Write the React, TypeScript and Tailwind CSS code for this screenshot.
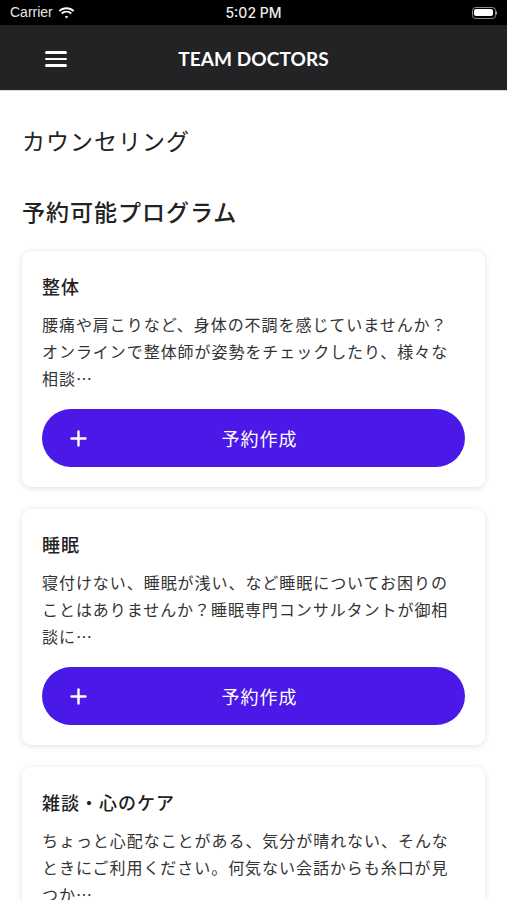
import React from "react";

const programs = [
  {
    title: "整体",
    lines: [
      "腰痛や肩こりなど、身体の不調を感じていませんか？",
      "オンラインで整体師が姿勢をチェックしたり、様々な",
      "相談…",
    ],
  },
  {
    title: "睡眠",
    lines: [
      "寝付けない、睡眠が浅い、など睡眠についてお困りの",
      "ことはありませんか？睡眠専門コンサルタントが御相",
      "談に…",
    ],
  },
  {
    title: "雑談・心のケア",
    lines: [
      "ちょっと心配なことがある、気分が晴れない、そんな",
      "ときにご利用ください。何気ない会話からも糸口が見",
      "つか…",
    ],
  },
];

const jp = { fontFamily: '"Noto Sans CJK JP", "Noto Sans", sans-serif' };

const StatusBar = () => (
  <div
    className="h-[25px] bg-black text-white flex items-center justify-between px-[10px] text-[14px]"
    style={{ fontFamily: '"Liberation Sans", Arial, sans-serif' }}
  >
    <div className="flex items-center gap-[5px] w-[120px]">
      <span className="text-[#e6e6e6]">Carrier</span>
      <svg width="17" height="12" viewBox="0 0 17 12" fill="#fff">
        <path d="M8.5 2.2c2.5 0 4.8 1 6.5 2.6l1.3-1.4C14.3 1.5 11.5.3 8.5.3S2.7 1.5.7 3.4L2 4.8c1.7-1.6 4-2.6 6.5-2.6z" />
        <path d="M8.5 5.6c1.6 0 3 .6 4.1 1.6l1.3-1.4C12.5 4.5 10.6 3.7 8.5 3.7S4.5 4.5 3.1 5.8l1.3 1.4c1.1-1 2.5-1.6 4.1-1.6z" />
        <path d="M8.5 8.9c.7 0 1.3.3 1.8.7L8.5 11.6 6.7 9.6c.5-.4 1.1-.7 1.8-.7z" />
      </svg>
    </div>
    <span className="text-[14px] text-[#eee]" style={{ fontFamily: 'Inter, "Liberation Sans", sans-serif', fontWeight: 500 }}>
      5:02 PM
    </span>
    <div className="w-[120px] flex justify-end">
      <div className="flex items-center">
        <div className="w-[24px] h-[12px] rounded-[3.5px] border border-[#8e8e8e] p-[1.5px]">
          <div className="w-full h-full bg-white rounded-[2px]" />
        </div>
        <div className="w-[1.5px] h-[4px] bg-[#8e8e8e] rounded-r-sm" />
      </div>
    </div>
  </div>
);

const NavBar = () => (
  <div className="h-[66px] bg-[#232326] border-b border-[#d9d9d9] relative flex items-center justify-center">
    <div className="absolute left-[45px] top-[26px] flex flex-col gap-[4px]">
      <div className="w-[22px] h-[2.5px] bg-white rounded" />
      <div className="w-[22px] h-[2.5px] bg-white rounded" />
      <div className="w-[22px] h-[2.5px] bg-white rounded" />
    </div>
    <span
      className="text-white font-bold text-[19px] tracking-[0.1px] mt-[4px]"
      style={{ fontFamily: 'Lato, "Open Sans", sans-serif' }}
    >
      TEAM DOCTORS
    </span>
  </div>
);

const Card = ({ title, lines }: { title: string; lines: string[] }) => (
  <div className="bg-white rounded-[9px] shadow-[0_1px_6px_rgba(0,0,0,0.13)] px-[20px] pt-[22px] pb-[20px]">
    <h3 className="text-[18px] font-medium text-[#222] tracking-[1px] leading-[26px]">{title}</h3>
    <div className="mt-[12px] text-[16px] leading-[27px] tracking-[0.95px] text-[#333]">
      {lines.map((l, i) => (
        <div key={i} className="whitespace-nowrap">
          {l}
        </div>
      ))}
    </div>
    <button className="mt-[17px] w-full h-[58px] rounded-full bg-[#4a19e8] text-white flex items-center relative">
      <svg
        className="absolute left-[28px]"
        width="17"
        height="17"
        viewBox="0 0 17 17"
        stroke="#fff"
        strokeWidth="2.4"
        strokeLinecap="round"
      >
        <path d="M8.5 1.5v14M1.5 8.5h14" />
      </svg>
      <span className="flex-1 text-center pl-[12px] text-[18px] tracking-[1px]">予約作成</span>
    </button>
  </div>
);

export default function App() {
  return (
    <div className="w-[507px] h-[900px] overflow-hidden bg-white" style={jp}>
      <StatusBar />
      <NavBar />
      <div className="px-[22px]">
        <h1 className="mt-[33px] text-[23px] leading-[32px] tracking-[1px] text-[#222]">
          カウンセリング
        </h1>
        <h2 className="mt-[39px] text-[23px] leading-[32px] tracking-[1px] font-medium text-[#222]">
          予約可能プログラム
        </h2>
        <div className="mt-[24px] flex flex-col gap-[22px]">
          {programs.map((p) => (
            <Card key={p.title} title={p.title} lines={p.lines} />
          ))}
        </div>
      </div>
    </div>
  );
}
